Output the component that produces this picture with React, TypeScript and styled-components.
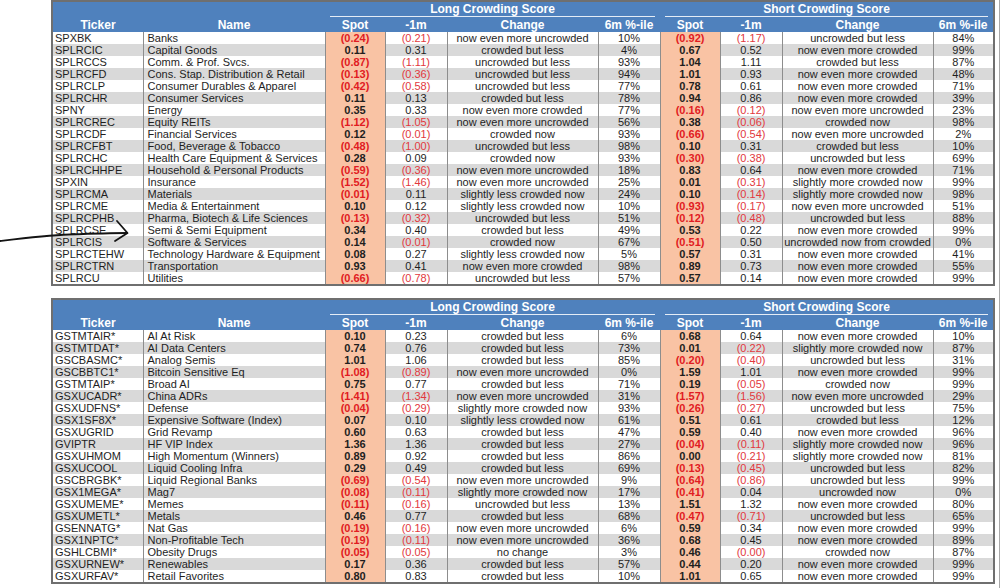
import React from "react";
import styled, { createGlobalStyle } from "styled-components";

const GlobalStyle = createGlobalStyle`
  html, body { margin: 0; padding: 0; background: #ffffff; }
  body { font-family: "Liberation Sans", Arial, sans-serif; }
`;

const Page = styled.div`
  position: relative;
  width: 1000px;
  height: 588px;
  box-sizing: border-box;
  padding-left: 51px;
  display: flex;
  flex-direction: column;
  gap: 12px;
  overflow: hidden;
  border-right: 1px solid #a8a8a8;
`;

const Table = styled.table`
  border-collapse: collapse;
  table-layout: fixed;
  width: 942px;
  border: 2px solid #6f6f6f;
  font-family: "Liberation Sans", Arial, sans-serif;
`;

const HeadCell = styled.th<{ $align?: string; $v?: string }>`
  background: #4f81bd;
  color: #ffffff;
  font-size: 12px;
  font-weight: 700;
  padding: 0;
  height: 15px;
  line-height: 14px;
  text-align: ${(p) => p.$align || "center"};
  vertical-align: ${(p) => p.$v || "middle"};
  white-space: nowrap;
`;

const GroupLabel = styled.div`
  margin: 0 5px;
  padding-top: 1px;
  line-height: 13px;
  border-bottom: 1px solid #e4ecf6;
`;

const Row = styled.tr<{ $alt: boolean }>`
  background: ${(p) => (p.$alt ? "#d9d9d9" : "#ffffff")};
`;

const Cell = styled.td<{ $align?: string; $pad?: number }>`
  height: 12px;
  line-height: 12px;
  padding: 0 0 0 ${(p) => p.$pad ?? 0}px;
  font-size: 11px;
  color: #1e1e1e;
  border-left: 1px solid #8d8d8d;
  text-align: ${(p) => p.$align || "center"};
  white-space: nowrap;
  overflow: hidden;
`;

const NumCell = styled(Cell)<{ $spot?: boolean; $neg?: boolean }>`
  background: ${(p) => (p.$spot ? "#f9c3a4" : "transparent")};
  font-weight: ${(p) => (p.$spot ? 700 : 400)};
  color: ${(p) => (p.$neg ? (p.$spot ? "#e11b22" : "#e2383d") : "#1e1e1e")};
`;

const ArrowSvg = styled.svg`
  position: absolute;
  left: 0;
  top: 0;
  width: 140px;
  height: 260px;
  overflow: visible;
  pointer-events: none;
`;

const table1 = `SPXBK|Banks|(0.24)|(0.21)|now even more uncrowded|10%|(0.92)|(1.17)|uncrowded but less|84%
SPLRCIC|Capital Goods|0.11|0.31|crowded but less|4%|0.67|0.52|now even more crowded|99%
SPLRCCS|Comm. & Prof. Svcs.|(0.87)|(1.11)|uncrowded but less|93%|1.04|1.11|crowded but less|87%
SPLRCFD|Cons. Stap. Distribution & Retail|(0.13)|(0.36)|uncrowded but less|94%|1.01|0.93|now even more crowded|48%
SPLRCLP|Consumer Durables & Apparel|(0.42)|(0.58)|uncrowded but less|77%|0.78|0.61|now even more crowded|71%
SPLRCHR|Consumer Services|0.11|0.13|crowded but less|78%|0.94|0.86|now even more crowded|39%
SPNY|Energy|0.35|0.33|now even more crowded|77%|(0.16)|(0.12)|now even more uncrowded|23%
SPLRCREC|Equity REITs|(1.12)|(1.05)|now even more uncrowded|56%|0.38|(0.06)|crowded now|98%
SPLRCDF|Financial Services|0.12|(0.01)|crowded now|93%|(0.66)|(0.54)|now even more uncrowded|2%
SPLRCFBT|Food, Beverage & Tobacco|(0.48)|(1.00)|uncrowded but less|98%|0.10|0.31|crowded but less|10%
SPLRCHC|Health Care Equipment & Services|0.28|0.09|crowded now|93%|(0.30)|(0.38)|uncrowded but less|69%
SPLRCHHPE|Household & Personal Products|(0.59)|(0.36)|now even more uncrowded|18%|0.83|0.64|now even more crowded|71%
SPXIN|Insurance|(1.52)|(1.46)|now even more uncrowded|25%|0.01|(0.31)|slightly more crowded now|99%
SPLRCMA|Materials|(0.01)|0.11|slightly less crowded now|24%|0.10|(0.14)|slightly more crowded now|98%
SPLRCME|Media & Entertainment|0.10|0.12|slightly less crowded now|10%|(0.93)|(0.17)|now even more uncrowded|51%
SPLRCPHB|Pharma, Biotech & Life Sciences|(0.13)|(0.32)|uncrowded but less|51%|(0.12)|(0.48)|uncrowded but less|88%
SPLRCSE|Semi & Semi Equipment|0.34|0.40|crowded but less|49%|0.53|0.22|now even more crowded|99%
SPLRCIS|Software & Services|0.14|(0.01)|crowded now|67%|(0.51)|0.50|uncrowded now from crowded|0%
SPLRCTEHW|Technology Hardware & Equipment|0.08|0.27|slightly less crowded now|5%|0.57|0.31|now even more crowded|41%
SPLRCTRN|Transportation|0.93|0.41|now even more crowded|98%|0.89|0.73|now even more crowded|55%
SPLRCU|Utilities|(0.66)|(0.78)|uncrowded but less|57%|0.57|0.14|now even more crowded|99%`;

const table2 = `GSTMTAIR*|AI At Risk|0.10|0.23|crowded but less|6%|0.68|0.64|now even more crowded|10%
GSTMTDAT*|AI Data Centers|0.74|0.76|crowded but less|73%|0.01|(0.22)|slightly more crowded now|87%
GSCBASMC*|Analog Semis|1.01|1.06|crowded but less|85%|(0.20)|(0.40)|uncrowded but less|31%
GSCBBTC1*|Bitcoin Sensitive Eq|(1.08)|(0.89)|now even more uncrowded|0%|1.59|1.01|now even more crowded|99%
GSTMTAIP*|Broad AI|0.75|0.77|crowded but less|71%|0.19|(0.05)|crowded now|99%
GSXUCADR*|China ADRs|(1.41)|(1.34)|now even more uncrowded|31%|(1.57)|(1.56)|now even more uncrowded|29%
GSXUDFNS*|Defense|(0.04)|(0.29)|slightly more crowded now|93%|(0.26)|(0.27)|uncrowded but less|75%
GSX1SF8X*|Expensive Software (Index)|0.07|0.10|slightly less crowded now|61%|0.51|0.61|crowded but less|12%
GSXUGRID|Grid Revamp|0.60|0.63|crowded but less|47%|0.59|0.40|now even more crowded|96%
GVIPTR|HF VIP Index|1.36|1.36|crowded but less|27%|(0.04)|(0.11)|slightly more crowded now|96%
GSXUHMOM|High Momentum (Winners)|0.89|0.92|crowded but less|86%|0.00|(0.21)|slightly more crowded now|81%
GSXUCOOL|Liquid Cooling Infra|0.29|0.49|crowded but less|69%|(0.13)|(0.45)|uncrowded but less|82%
GSCBRGBK*|Liquid Regional Banks|(0.69)|(0.54)|now even more uncrowded|9%|(0.64)|(0.86)|uncrowded but less|99%
GSX1MEGA*|Mag7|(0.08)|(0.11)|slightly more crowded now|17%|(0.41)|0.04|uncrowded now|0%
GSXUMEME*|Memes|(0.11)|(0.16)|uncrowded but less|13%|1.51|1.32|now even more crowded|80%
GSXUMETL*|Metals|0.46|0.77|crowded but less|68%|(0.47)|(0.71)|uncrowded but less|65%
GSENNATG*|Nat Gas|(0.19)|(0.16)|now even more uncrowded|6%|0.59|0.34|now even more crowded|99%
GSX1NPTC*|Non-Profitable Tech|(0.19)|(0.11)|now even more uncrowded|36%|0.68|0.45|now even more crowded|89%
GSHLCBMI*|Obesity Drugs|(0.05)|(0.05)|no change|3%|0.46|(0.00)|crowded now|87%
GSXURNEW*|Renewables|0.17|0.36|crowded but less|57%|0.44|0.20|now even more crowded|99%
GSXURFAV*|Retail Favorites|0.80|0.83|crowded but less|10%|1.01|0.65|now even more crowded|99%`;

const parse = (s: string) => s.split("\n").map((l) => l.split("|"));

const widths = [91, 182, 60, 62, 151, 62, 60, 62, 151, 61];

const isNeg = (v: string) => v.startsWith("(");

function CrowdTable({ rows }: { rows: string[][] }) {
  return (
    <Table>
      <colgroup>
        {widths.map((w, i) => (
          <col key={i} style={{ width: w }} />
        ))}
      </colgroup>
      <thead>
        <tr>
          <HeadCell rowSpan={2} $v="bottom">Ticker</HeadCell>
          <HeadCell rowSpan={2} $v="bottom">Name</HeadCell>
          <HeadCell colSpan={4} $v="top">
            <GroupLabel>Long Crowding Score</GroupLabel>
          </HeadCell>
          <HeadCell colSpan={4} $v="top">
            <GroupLabel>Short Crowding Score</GroupLabel>
          </HeadCell>
        </tr>
        <tr>
          <HeadCell>Spot</HeadCell>
          <HeadCell>-1m</HeadCell>
          <HeadCell>Change</HeadCell>
          <HeadCell>6m %-ile</HeadCell>
          <HeadCell>Spot</HeadCell>
          <HeadCell>-1m</HeadCell>
          <HeadCell>Change</HeadCell>
          <HeadCell>6m %-ile</HeadCell>
        </tr>
      </thead>
      <tbody>
        {rows.map((r, i) => (
          <Row key={r[0]} $alt={i % 2 === 1}>
            <Cell $align="left" $pad={2}>{r[0]}</Cell>
            <Cell $align="left" $pad={4}>{r[1]}</Cell>
            <NumCell $spot $neg={isNeg(r[2])}>{r[2]}</NumCell>
            <NumCell $neg={isNeg(r[3])}>{r[3]}</NumCell>
            <Cell>{r[4]}</Cell>
            <Cell>{r[5]}</Cell>
            <NumCell $spot $neg={isNeg(r[6])}>{r[6]}</NumCell>
            <NumCell $neg={isNeg(r[7])}>{r[7]}</NumCell>
            <Cell>{r[8]}</Cell>
            <Cell>{r[9]}</Cell>
          </Row>
        ))}
      </tbody>
    </Table>
  );
}

export default function App() {
  return (
    <>
      <GlobalStyle />
      <Page>
        <CrowdTable rows={parse(table1)} />
        <CrowdTable rows={parse(table2)} />
        <ArrowSvg viewBox="0 0 140 260">
          <path
            d="M0 241 C 25 238, 45 235.5, 70 234.5 S 110 233, 127 233"
            fill="none"
            stroke="#141414"
            strokeWidth={1.8}
            strokeLinecap="round"
          />
          <path
            d="M117 221 L127.5 233 L115 241"
            fill="none"
            stroke="#141414"
            strokeWidth={1.8}
            strokeLinecap="round"
            strokeLinejoin="round"
          />
        </ArrowSvg>
      </Page>
    </>
  );
}
